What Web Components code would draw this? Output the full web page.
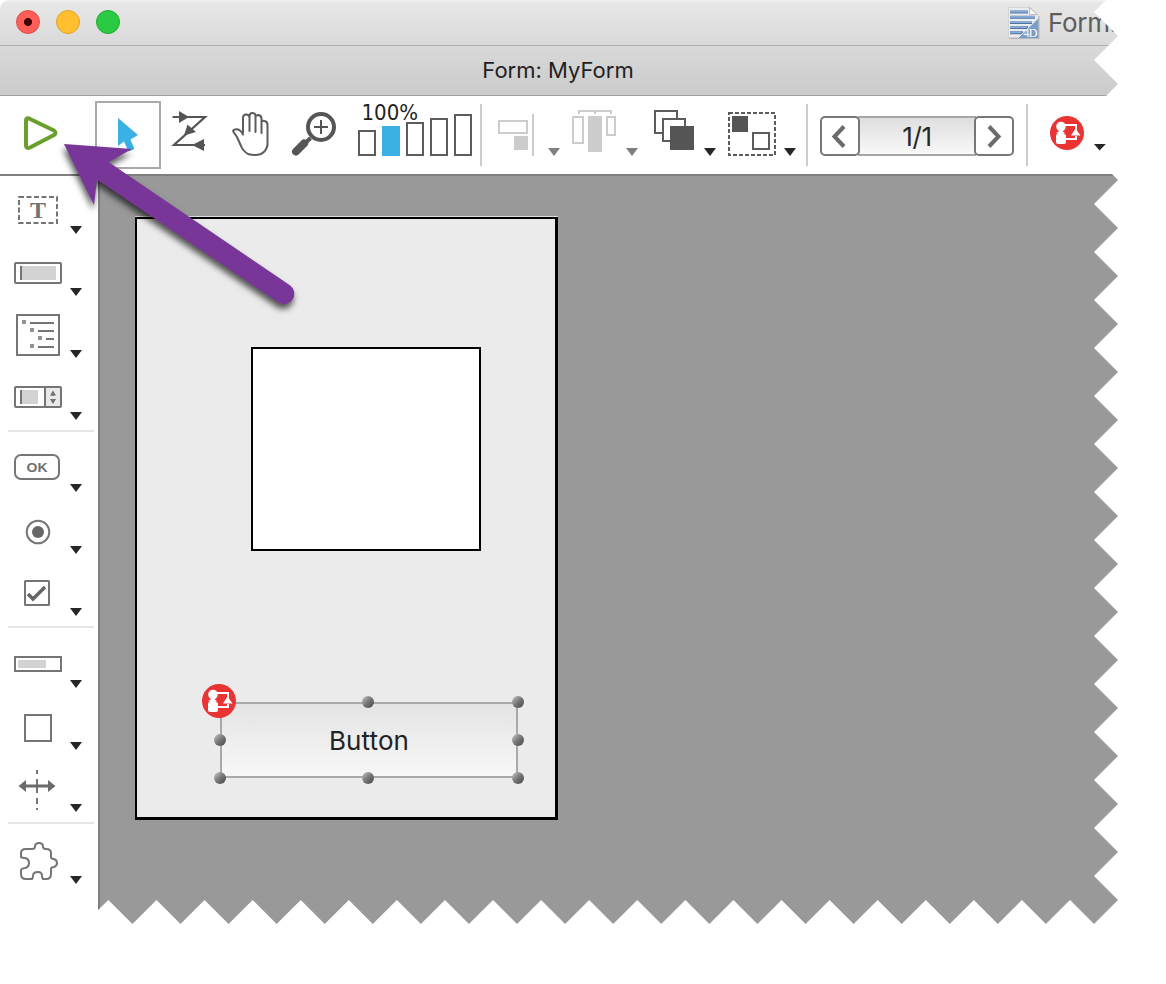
<!DOCTYPE html>
<html lang="en">
<head>
<meta charset="utf-8">
<title>Form: MyForm</title>
<style>
html,body{margin:0;padding:0;background:#fff;width:1166px;height:984px;overflow:hidden}
body{font-family:Inter,Roboto,sans-serif;color:#262626}
</style>
</head>
<body>
<form-window></form-window>
<script>
const define = (name, html, setup) => {
  customElements.define(name, class extends HTMLElement {
    connectedCallback() {
      if (this.shadowRoot) return;
      const root = this.attachShadow({ mode: 'open' });
      root.innerHTML = html;
      if (setup) setup(this, root);
    }
  });
};

define('window-title', `
<style>
:host{display:flex;box-sizing:border-box;height:46px;align-items:center;background:linear-gradient(#e8e8e8,#d9d9d9);border-bottom:1px solid #afafaf;padding-left:16px;box-shadow:inset 0 2px #efefef}
.lights{display:flex;gap:16px;width:992px;flex:none;margin-top:-1px}
i{box-sizing:border-box;width:24px;height:24px;border-radius:50%;border:1px solid}
.r{background:radial-gradient(circle,#400 0 3.6px,#ff5f58 4.4px);border-color:#e2463f}
.y{background:#ffbf2f;border-color:#e1a32a}
.g{background:#2aca42;border-color:#1eab2c}
svg{flex:none}
span{font-size:26px;line-height:30px;margin-left:8px;color:#5c5c5c;white-space:nowrap;font-family:Inter,Roboto,sans-serif;letter-spacing:-.3px}
</style>
<div class="lights"><i class="r"></i><i class="y"></i><i class="g"></i></div>
<svg width="32" height="34" viewBox="0 0 32 34">
<path d="M.5 1.500H22L30 9V31.500H.5Z" fill="#e9edf2" stroke="#d4d4d4"/>
<path d="M2 6H20M2 11.200H27M2 16.400H24M2 21.600H20M2 26.800H15" stroke="#56749c" stroke-width="3"/>
<path d="M2 5.600H20M2 10.800H27M2 16H24M2 21.200H19M2 26.400H14" stroke="#86abd8" stroke-width="1.800"/>
<path d="M30.500 12V32H9.500Z" fill="#7a9dc8"/><path d="M10 32L30.500 12" stroke="#dce6f1"/>
<path d="M21.500 1.500V8.500H29.500Z" fill="#f7f7f7" stroke="#bcbcbc"/><path d="M1 32.500H31V10" fill="none" stroke="#999" stroke-opacity=".6"/>
<text x="15.500" y="30.500" font-family="Liberation Serif" font-size="12" fill="#fff" textLength="14">4D</text>
</svg><span>Form.</span>`);

define('form-caption', `
<style>:host{display:flex;box-sizing:border-box;height:50px;justify-content:center;align-items:center;background:linear-gradient(#d9d9d9,#cbcbcb);border-bottom:1px solid #a0a0a0;font:22px/30px Inter,Roboto,sans-serif;color:#1f1f1f}
span{white-space:nowrap;margin-top:-1px;margin-left:-2px}</style><span><slot></slot></span>`);

define('tool-icon', `
<style>:host{display:block;flex:none}svg{display:block}.k{fill:none;stroke:#5c5c5c;stroke-width:2}.s{fill:none;stroke:#757575;stroke-width:2}.d{fill:#555}.l{fill:none;stroke:#ccc;stroke-width:2}
text{font-family:"Liberation Serif",serif}</style><svg></svg>`, (el, root) => {
  const [x, y, w, h] = el.getAttribute('box').split(' ').map(Number);
  const svg = root.querySelector('svg');
  svg.setAttribute('width', w); svg.setAttribute('height', h);
  svg.setAttribute('viewBox', [x, y, w, h].join(' '));
  svg.innerHTML = ICONS[el.getAttribute('name')];
});

const action = (cx, cy) => `<g transform="translate(${cx} ${cy})"><circle r="17" fill="#ea3434"/>
<path d="M-4-8H9V-1M9 3V6H-3" fill="none" stroke="#fff" stroke-width="2"/>
<circle cx="-6" cy="-6.500" r="4.800" fill="#fff"/><path d="M-11 0L-6-3-2 0-6 2Z" fill="#fff"/>
<rect x="-11" y="1" width="10" height="10" rx="2" fill="#fff"/><path d="M8.500-4.500L13.500 2.500H4Z" fill="#fff"/></g>`;
const tri = (x, y, c = '#262626') => `<path d="M${x} ${y}h12l-6 8z" fill="${c}"/>`;

const ICONS = {
run: `<path d="M26 120.500Q26 117.500 29 118.500L54 130.500Q57 133 54 135L30 147.500Q26 149 26 145.500Z" fill="none" stroke="#6a9f2b" stroke-width="4" stroke-linejoin="round"/>`,
pointer: `<path d="M118 118V146L124 141.500 128.500 151.500 134.500 149 130.500 139.500 138 135Z" fill="#3bb0e5"/>`,
order: `<g fill="none" stroke="#555" stroke-width="2.200"><path d="M172.500 117H205L174 145H205"/></g><path class="d" d="M179 111V123L189 117ZM204 139V151L192 145ZM184 135.500L187.500 124.500 196 132Z"/>`,
hand: `<g fill="none" stroke="#5c5c5c" stroke-width="2" stroke-linecap="round" stroke-linejoin="round"><path d="M243 133V118Q243 114.500 246 114.500 249.500 114.500 249.500 118M249.500 131V116Q249.500 113 252.500 113 255.500 113 255.500 116V132M255.500 117Q256 115 258.500 115 261.500 115.500 261.500 119V133M261.500 122Q262 120.500 264.500 121 267.500 121.500 267.500 125V145Q266.500 151 261 154 255 156 248 154 243 151 241 146L237 137 233.500 132Q232.500 130 235 129.500 240 128.500 243 134.500"/></g>`,
zoom: `<circle cx="321" cy="127" r="13" fill="none" stroke="#555" stroke-width="4"/><path d="M314 127H328M321 120V134" stroke="#555" stroke-width="2"/><path d="M310.500 138L304 144.500" stroke="#555" stroke-width="4"/><path d="M304 143.500L296 151.500" stroke="#555" stroke-width="8" stroke-linecap="round"/>`,
scale: `<path d="M382 126h18v30h-18z" fill="#3bb0e5"/><g class="k"><path d="M359 131h16v24h-16zM407 123h16v32h-16zM431 119h16v36h-16zM455 115h16v40h-16z"/></g>`,
align: `<path d="M499 121h28v12h-28zM533 114v42" class="l"/><path d="M514 136h14v14h-14z" fill="#ccc"/>${tri(548,148,'#808080')}`,
distribute: `<path d="M579 114v-3h32v3M595 111v3M573 117h10v26h-10zM607 117h8v18h-8z" class="l"/><path d="M588 116h14v36h-14z" fill="#ccc"/>${tri(626,148,'#808080')}`,
level: `<g class="k" style="fill:#fff"><path d="M655 111h22v22h-22z"/><path d="M663 119h22v22h-22z"/></g><path class="d" d="M670 126h24v24h-24z"/>${tri(704,148)}`,
group: `<path d="M729 113h46v42h-46z" class="k" stroke-dasharray="4 2"/><path class="d" d="M732 116h16v16h-16z"/><path d="M753 133h16v16h-16z" class="k"/>${tri(784,148)}`,
action: action(1067,133) + `<path d="M1094 144h12l-6 7z" fill="#262626"/>`,
badge: action(219,701),
text: `<path d="M19 197h38v26h-38z" class="s" stroke-dasharray="5 2.500"/><text x="38" y="218.300" font-size="24" font-weight="700" fill="#737373" text-anchor="middle">T</text>${tri(70,226)}`,
input: `<rect x="15" y="263" width="46" height="20" rx="1" class="s"/><path d="M20 266h36v14H20z" fill="#d3d3d3"/><path d="M21 266v14" class="s"/>${tri(70,288)}`,
list: `<path d="M17 315h42v40H17z" class="s"/><path d="M30 323h24M38 331h16M46 339h8M38 347h16" class="s"/><path d="M22 320h4v4h-4zM30 328h4v4h-4zM38 336h4v4h-4zM30 344h4v4h-4z" fill="#929292"/>${tri(70,350)}`,
combo: `<path d="M46 388h14v18H46z" fill="#e9e9e9"/><rect x="15" y="387" width="46" height="20" rx="1" class="s"/><path d="M20 390h18v14H20z" fill="#d3d3d3"/><path d="M21 390v14M45 387v20" class="s"/><path d="M50 395.500l3-5 3 5zM50 399l3 5 3-5z" fill="#6b6b6b"/><path d="M53 393v3M53 399v3" class="s"/>${tri(70,412)}`,
button: `<rect x="15" y="455" width="44" height="24" rx="6" class="s"/><text x="37" y="471.500" style="font-family:Liberation Sans" font-size="13" font-weight="700" fill="#707070" text-anchor="middle" textLength="21" lengthAdjust="spacingAndGlyphs">OK</text>${tri(70,484)}`,
radio: `<circle cx="38" cy="532" r="11.300" class="s"/><circle cx="38" cy="532" r="6" fill="#666"/>${tri(70,546)}`,
check: `<rect x="25" y="581" width="24" height="24" rx=".5" class="s"/><path d="M28 594l5 5 12-12" fill="none" stroke="#666" stroke-width="3.500"/>${tri(70,608)}`,
progress: `<path d="M15 657h46v14H15z" class="s"/><path d="M18 660h28v8H18z" fill="#d3d3d3"/>${tri(70,680)}`,
rect: `<path d="M25 715h26v26H25z" class="s"/>${tri(70,742)}`,
splitter: `<path d="M37 770v4M37 779v14M37 798v6M37 808v2" class="s"/><path d="M22 786h30" stroke="#6b6b6b" stroke-width="3"/><path d="M18.500 786l7.500-6v12zM55.500 786l-7.500-6v12z" fill="#6b6b6b"/>${tri(70,804)}`,
plugin: `<path d="M26 849H32Q35 849 35 846.500 35 843 39 843 43 843 43 846.500 43 849 46 849 51 849 51 853V857Q51 859 54 859 57 860 57 863 57 866 54 867 51 867 51 869V874Q51 879 46 879H43Q42 878 42 876 42 872 38 872 33 872 33 876 33 878 32 879H26Q21 879 21 874V870Q22 868 25 868 29 867 29 863 29 859 25 858 22 858 21 857V853Q21 849 26 849" fill="none" stroke="#757575" stroke-width="2"/>${tri(70,876)}`
};

define('page-stepper', `
<style>
:host{display:flex;box-sizing:border-box;width:194px;height:40px;flex:none}
.b{position:relative;z-index:1;box-sizing:border-box;width:40px;flex:none;border:2px solid #777;border-radius:5px;background:#fff;display:flex;align-items:center;justify-content:center}
.v{box-sizing:border-box;flex:1;margin:0 -2px;border:solid #a6a6a6;border-width:2px 0;background:linear-gradient(#dfdfdf,#f8f8f8);text-align:center;font:26px/38px Inter,Roboto,sans-serif;letter-spacing:-.4px;color:#262626}
path{fill:none;stroke:#6b6b6b;stroke-width:4}
</style>
<div class="b"><svg width="36" height="36" viewBox="0 0 36 36"><path d="M22 8.500L12.500 18.500 22 28.500"/></svg></div><div class="v"><slot></slot></div>
<div class="b"><svg width="36" height="36" viewBox="0 0 36 36"><path d="M13 8.500L22.500 18.500 13 28.500"/></svg></div>`);

define('form-toolbar', `
<style>
:host{display:flex;box-sizing:border-box;height:80px;background:#fff;border-bottom:2px solid #808080;align-items:flex-start}
.sel{box-sizing:border-box;width:66px;height:68px;margin-top:5px;border:2px solid #a9a9a9;flex:none}
.scale{display:grid;width:120px;flex:none}
.scale>*{grid-area:1/1}
.pc{font:22px/30px "DejaVu Sans Condensed","DejaVu Sans",sans-serif;font-stretch:condensed;color:#1f1f1f;padding-left:6.5px;margin-top:2px}
hr{border:0;margin:8px 0 0;width:2px;height:62px;background:#ccc;flex:none}
page-stepper{margin:20px 12px 0}
</style>
<tool-icon name="run" box="0 96 95 78"></tool-icon>
<div class="sel"><tool-icon name="pointer" box="97 103 62 64"></tool-icon></div>
<tool-icon name="order" box="161 96 60 78"></tool-icon>
<tool-icon name="hand" box="221 96 60 78"></tool-icon>
<tool-icon name="zoom" box="281 96 74 78"></tool-icon>
<div class="scale"><tool-icon name="scale" box="355 96 120 78"></tool-icon><span class="pc">100%</span></div>
<hr style="margin-left:5px">
<tool-icon name="align" box="482 96 84 78"></tool-icon>
<tool-icon name="distribute" box="566 96 78 78"></tool-icon>
<tool-icon name="level" box="644 96 76 78"></tool-icon>
<tool-icon name="group" box="720 96 86 78"></tool-icon>
<hr><page-stepper>1/1</page-stepper><hr>
<tool-icon name="action" box="1028 96 88 78"></tool-icon>`);

define('object-palette', `
<style>
:host{display:block;box-sizing:border-box;width:98px;padding-top:4px;background:#fff;flex:none}
section{margin:0 4px 6px 8px;padding-bottom:2px;border-bottom:2px solid #e6e6e6}
section:last-child{border:0}
tool-icon{margin-left:-8px}
</style>`, (el, root) => {
  let y = 180;
  for (const names of [['text','input','list','combo'],['button','radio','check'],['progress','rect','splitter'],['plugin']]) {
    const s = document.createElement('section');
    for (const n of names) {
      const t = document.createElement('tool-icon');
      t.setAttribute('name', n);
      t.setAttribute('box', `0 ${y} 90 62`);
      s.append(t);
      y += 62;
    }
    y += 10;
    root.append(s);
  }
});

define('selected-button', `
<style>
:host{display:flex;box-sizing:border-box;position:relative;width:298px;height:76px;border:2px solid #a9a9a9;background:linear-gradient(#e4e4e4,#f7f7f7);align-items:center;justify-content:center;padding-top:2px;font:26px/30px Inter,Roboto,sans-serif;letter-spacing:.1px;color:#222}
i{position:absolute;width:12px;height:12px;border-radius:50%;margin:-6px;background:linear-gradient(135deg,#b0b0b0 15%,#777 50%,#4d4d4d 90%)}
tool-icon{position:absolute;left:-20px;top:-20px}
</style>
<slot></slot>
<i style="left:146px;top:-2px"></i><i style="left:296px;top:-2px"></i>
<i style="left:-2px;top:36px"></i><i style="left:296px;top:36px"></i>
<i style="left:-2px;top:74px"></i><i style="left:146px;top:74px"></i><i style="left:296px;top:74px"></i>
<tool-icon name="badge" box="202 684 34 34"></tool-icon>`);

define('form-canvas', `
<style>
:host{display:block;box-sizing:border-box;flex:1;background:#999;border-left:2px solid #808080;padding:41px 0 0 35px}
.page{box-sizing:border-box;position:relative;width:423px;height:603px;border:2px solid #000;border-right-width:3px;border-bottom-width:3px;background:#ebebeb;box-shadow:0 -1px #ddd}
.box{box-sizing:border-box;position:absolute;left:114px;top:128px;width:230px;height:204px;border:2px solid #000;background:#fff}
selected-button{position:absolute;left:83px;top:483px}
</style>
<div class="page"><div class="box"></div><selected-button>Button</selected-button></div>`);

define('pointer-arrow', `
<style>:host{position:absolute;left:0;top:0;pointer-events:none}svg{display:block;filter:drop-shadow(-1px 5px 3px rgba(0,0,0,.65))}</style>
<svg width="340" height="340" viewBox="0 0 340 340"><path d="M64 144L132 149 108.500 162 289.500 285A10 10 0 0 1 278.500 302.500L97 179.500 94 205Z" fill="#783699"/></svg>`);

define('form-window', `
<style>
:host{display:flex;flex-direction:column;position:relative;width:1118px;height:924px;border-top-left-radius:9px;overflow:hidden}
main{display:flex;flex:1}
</style>
<window-title></window-title><form-caption>Form: MyForm</form-caption>
<form-toolbar></form-toolbar>
<main><object-palette></object-palette><form-canvas></form-canvas></main>
<pointer-arrow></pointer-arrow>`, el => {
  const p = ['0 0', '1106px 0'];
  for (let y = 12; y < 900; y += 48) p.push(`1094px ${y}px`, `1118px ${y + 24}px`);
  for (let i = 0; i < 21; i++) p.push(`${1094 - i * 48.08}px 924px`, `${1070 - i * 48.08}px 900px`);
  p.push('98px 910px', '0 910px');
  el.style.clipPath = `polygon(${p.join(',')})`;
});
</script>
</body>
</html>
